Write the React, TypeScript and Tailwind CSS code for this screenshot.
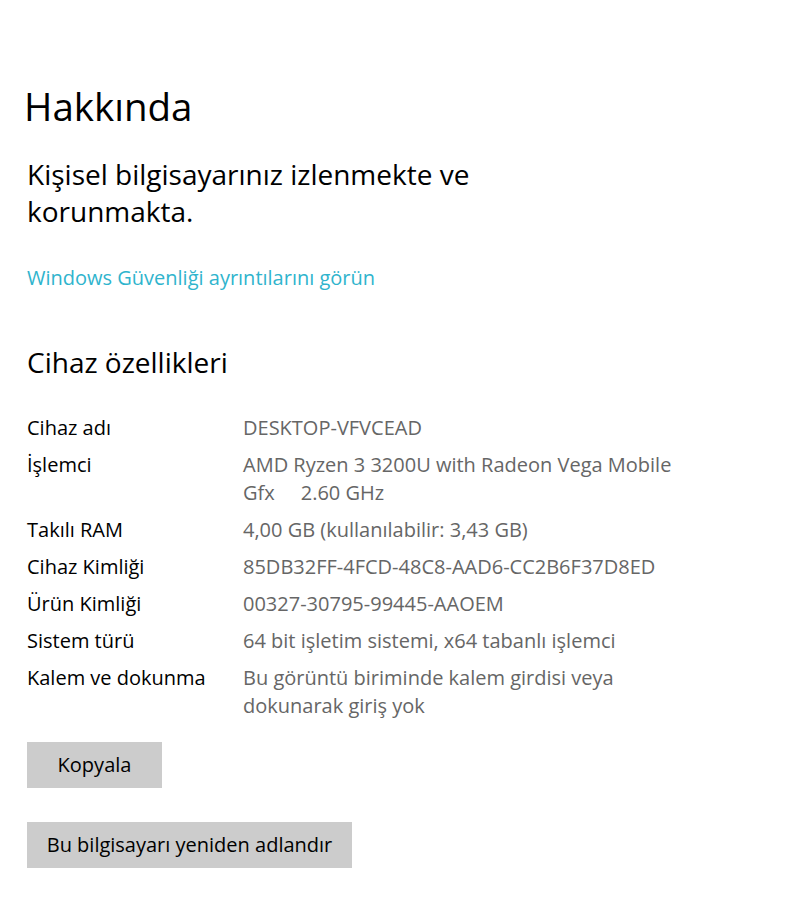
export default function App() {
  const rows: [string, string][] = [
    ["Cihaz adı", "DESKTOP-VFVCEAD"],
    ["İşlemci", "AMD Ryzen 3 3200U with Radeon Vega Mobile\nGfx     2.60 GHz"],
    ["Takılı RAM", "4,00 GB (kullanılabilir: 3,43 GB)"],
    ["Cihaz Kimliği", "85DB32FF-4FCD-48C8-AAD6-CC2B6F37D8ED"],
    ["Ürün Kimliği", "00327-30795-99445-AAOEM"],
    ["Sistem türü", "64 bit işletim sistemi, x64 tabanlı işlemci"],
    ["Kalem ve dokunma", "Bu görüntü biriminde kalem girdisi veya\ndokunarak giriş yok"],
  ];

  return (
    <main className="min-h-screen bg-white px-[27px] pt-[80px] pb-10 font-['Open_Sans',sans-serif] text-black">
      <h1 className="-ml-[3px] text-[38.5px] leading-[52px] font-normal">Hakkında</h1>

      <p className="mt-[24px] text-[28px] leading-[37px]">
        Kişisel bilgisayarınız izlenmekte ve
        <br />
        korunmakta.
      </p>

      <a className="mt-[34px] block text-[20px] leading-[28px] text-[#2fb4cd]" href="#">
        Windows Güvenliği ayrıntılarını görün
      </a>

      <h2 className="mt-[52px] text-[28px] leading-[36px] font-normal">Cihaz özellikleri</h2>

      <dl className="mt-[34px] grid grid-cols-[216px_1fr] gap-y-[9px] text-[20px] leading-[28px]">
        {rows.map(([label, value]) => (
          <div className="contents" key={label}>
            <dt>{label}</dt>
            <dd className="whitespace-pre text-[#666666]">{value}</dd>
          </div>
        ))}
      </dl>

      <div className="mt-[22px] flex flex-col items-start gap-[34px]">
        <button className="h-[46px] w-[135px] bg-[#cccccc] text-[20px] text-black">Kopyala</button>
        <button className="h-[46px] w-[325px] bg-[#cccccc] text-[20px] text-black">
          Bu bilgisayarı yeniden adlandır
        </button>
      </div>
    </main>
  );
}
